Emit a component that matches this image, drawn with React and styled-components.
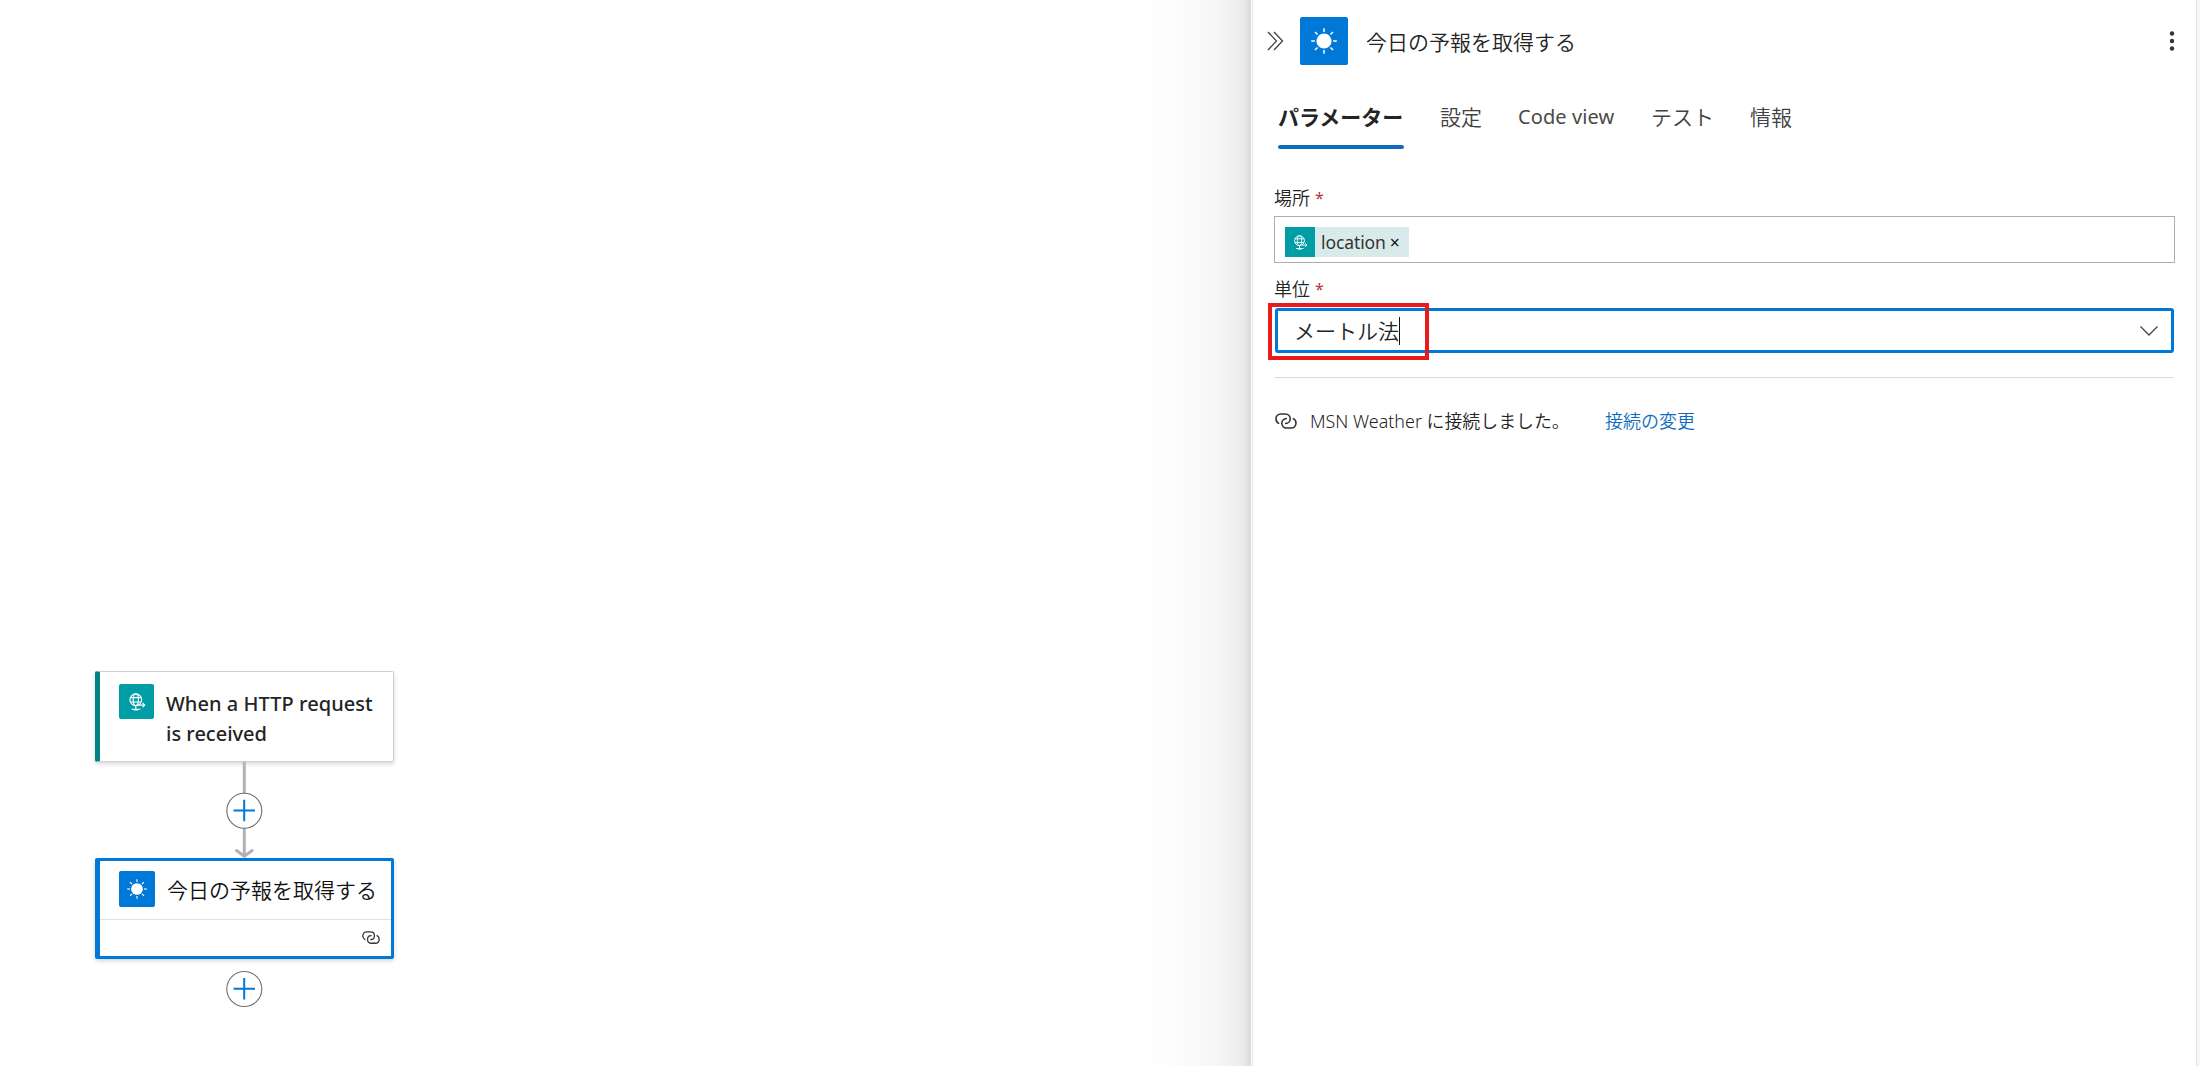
import React from "react";
import styled, { createGlobalStyle } from "styled-components";

const Global = createGlobalStyle`
  * { box-sizing: border-box; }
  body { margin: 0; background: #fff; overflow: hidden; }
`;

const Page = styled.div`
  display: flex;
  width: 2200px;
  height: 1066px;
  background: #fff;
  color: #242424;
  font-family: "Noto Sans", "Noto Sans CJK JP", sans-serif;
`;

const Text = styled.span`
  display: block;
  white-space: nowrap;
  font-size: ${(p) => p.$size || 21}px;
  line-height: ${(p) => p.$line || 28}px;
  font-weight: ${(p) => p.$weight || 400};
  letter-spacing: ${(p) => p.$track || 0}px;
  color: ${(p) => p.$color || "#242424"};
`;

const Canvas = styled.main`
  position: relative;
  flex: 0 0 1251px;
  background: linear-gradient(to right, #fff 1140px, #fcfcfc 1178px, #f6f6f6 1218px, #eeeeee 1238px, #e8e8e8 1245px, #dadada 1251px);
`;

const Node = styled.article`
  position: absolute;
  left: 95px;
  top: ${(p) => p.$top}px;
  width: 299px;
  height: ${(p) => p.$height}px;
  display: flex;
  flex-direction: column;
  background: #fff;
  border-style: solid;
  border-color: ${(p) => (p.$selected ? "#0078d7" : "#d0d0d2")};
  border-width: ${(p) => (p.$selected ? "3px" : "1px")};
  border-left: 5px solid ${(p) => (p.$selected ? "#0078d7" : "#038387")};
  border-radius: 2px;
  box-shadow: 0 2px 4px rgba(0, 0, 0, 0.16);
`;

const NodeHead = styled.div`
  display: flex;
  flex: 1;
  gap: 12px;
  padding: ${(p) => p.$top}px 0 0 19px;
`;

const NodeTitle = styled.div`
  padding-top: ${(p) => p.$top}px;
`;

const NodeFoot = styled.div`
  display: flex;
  justify-content: flex-end;
  align-items: center;
  height: 37px;
  padding-right: 11px;
  border-top: 1px solid #e1e1e1;
`;

const Tile = styled.div`
  display: flex;
  flex: none;
  align-items: center;
  justify-content: center;
  width: ${(p) => p.$size}px;
  height: ${(p) => p.$size}px;
  border-radius: ${(p) => (p.$square ? 0 : 2)}px;
  background: ${(p) => p.$bg};
`;

const Edge = styled.svg`
  position: absolute;
  left: 226px;
  top: ${(p) => p.$top}px;
`;

const Panel = styled.aside`
  display: flex;
  flex-direction: column;
  flex: 0 0 945px;
  border-left: 1px solid #e4e4e4;
  border-right: 1px solid #e3e3e3;
  margin-left: 1px;
  padding: 17px 20px 0 21px;
  background: #fff;
`;

const Gutter = styled.div`
  flex: 1;
  background: #f7f7f7;
`;

const Header = styled.header`
  display: flex;
  align-items: center;
  height: 48px;
  margin: 0 1px 0 -7px;
`;

const Title = styled.h1`
  flex: 1;
  margin: 2px 0 0 18px;
  font-weight: 400;
`;

const Collapse = styled.div`
  display: flex;
  width: 33px;
`;

const TabList = styled.nav`
  display: flex;
  gap: 36px;
  height: 48px;
  margin: 37px 0 0 4px;
`;

const Tab = styled.div`
  width: ${(p) => p.$width}px;
  padding-top: 1px;
`;

const ActiveTab = styled.div`
  display: flex;
  flex-direction: column;
  justify-content: space-between;
  width: 126px;
  height: 47px;
  padding-top: 1px;
`;

const Underline = styled.span`
  height: 4px;
  border-radius: 2px;
  background: #0f6cbd;
`;

const Label = styled.label`
  display: flex;
  gap: 5px;
  height: 24px;
  margin-top: ${(p) => p.$top}px;
`;

const TokenField = styled.div`
  display: flex;
  width: 901px;
  height: 47px;
  margin-top: 6px;
  padding: 10px;
  border: 1px solid #adadad;
`;

const Token = styled.div`
  display: flex;
  align-items: center;
  width: 124px;
  height: 30px;
  background: #d9eaeb;
`;

const TokenText = styled.div`
  display: flex;
  gap: 4px;
  padding-left: 6px;
`;

const Combo = styled.div`
  position: relative;
  display: flex;
  align-items: center;
  justify-content: space-between;
  width: 899px;
  height: 45px;
  margin: 7px 0 0 1px;
  padding: 0 13px 0 16px;
  border: 3px solid #0078d7;
  border-radius: 3px;
`;

const ComboValue = styled.div`
  display: flex;
  align-items: center;
  border-right: 1px solid #111;
`;

const Highlight = styled.div`
  position: absolute;
  left: -10px;
  top: -8px;
  width: 161px;
  height: 57px;
  border: 4px solid #e81b1b;
`;

const Connection = styled.footer`
  display: flex;
  align-items: center;
  width: 899px;
  height: 87px;
  margin: 24px 0 0 1px;
  border-top: 1px solid #dcdcdc;
`;

const Message = styled.div`
  width: 295px;
  margin-left: 13px;
`;

const Sun = ({ size }) => (
  <svg width={size} height={size} viewBox="0 0 26 26" stroke="#fff" strokeWidth="1.5">
    <circle cx="13" cy="13" r="7.600" fill="#fff" stroke="none" />
    {[0, 45, 90, 135, 180, 225, 270, 315].map((a) => (
      <path key={a} d="M13 0.2v3.7" transform={`rotate(${a} 13 13)`} />
    ))}
  </svg>
);

const Globe = ({ size }) => (
  <svg width={size} height={size} viewBox="0 0 18 18" fill="none" stroke="#fff" strokeWidth="1.1">
    <circle cx="7.8" cy="6.8" r="5.9" />
    <ellipse cx="7.8" cy="6.8" rx="2.6" ry="5.9" />
    <path d="M2.4 4.6h10.8M2.4 9h10.8M7.8 12.7v3M3.5 16.2h9M6 17h4" />
    <path d="M10.500 12.1h6M14.6 9.900l2.200 2.200-2.200 2.200" />
  </svg>
);

const Link = ({ width, stroke = "#333" }) => (
  <svg width={width} height={width * 0.727} viewBox="0 0 22 16" fill="none" stroke={stroke} strokeWidth="1.6" strokeLinecap="round">
    <path d="M3.600 10.400C2 9.500 1 7.900 1 6c0-2.900 2-5 5-5h4.200c3 0 5 2 5 4.700s-2 4.700-4.400 4.700" />
    <path d="M18.400 5.600c1.600.9 2.600 2.500 2.600 4.400 0 2.900-2 5-5 5h-4.200c-3 0-5-2-5-4.700s2-4.700 4.400-4.700" />
  </svg>
);

const Plus = ({ cy }) => (
  <g>
    <circle cx="18.3" cy={cy} r="17.5" fill="#fff" stroke="#707070" strokeWidth="1.1" />
    <path d={`M7.500 ${cy - 0.3}h21.500M18.200 ${cy - 11}v21.500`} stroke="#0078d7" strokeWidth="2" />
  </g>
);

export default function App() {
  return (
    <Page>
      <Global />
      <Canvas>
        <Node $top={671} $height={91}>
          <NodeHead $top={12}>
            <Tile $size={35} $bg="#009da5"><Globe size={18} /></Tile>
            <NodeTitle $top={5}>
              <Text $size={20} $line={30} $weight={500} $track={0.05}>When a HTTP request</Text>
              <Text $size={20} $line={30} $weight={500}>is received</Text>
            </NodeTitle>
          </NodeHead>
        </Node>
        <Edge $top={762} width="37" height="97">
          <path d="M18.300 0v93" stroke="#b3b1b8" strokeWidth="3" />
          <path d="M10.500 88.500l7.800 5.700 7.800-5.700" fill="none" stroke="#b3b1b8" strokeWidth="3" strokeLinecap="round" strokeLinejoin="round" />
          <Plus cy={48.7} />
        </Edge>
        <Node $selected $top={858} $height={101}>
          <NodeHead $top={10}>
            <Tile $size={36} $bg="#0078d7"><Sun size={20} /></Tile>
            <NodeTitle $top={5}>
              <Text $weight={350} $color="#111">今日の予報を取得する</Text>
            </NodeTitle>
          </NodeHead>
          <NodeFoot><Link width={18} /></NodeFoot>
        </Node>
        <Edge $top={970} width="37" height="38"><Plus cy={19} /></Edge>
      </Canvas>
      <Panel>
        <Header>
          <Collapse>
            <svg width="17" height="20" viewBox="0 0 17 20" fill="none" stroke="#424242" strokeWidth="1.300">
              <path d="M1 1l8.500 9L1 19M7 1l8.500 9L7 19" />
            </svg>
          </Collapse>
          <Tile $size={48} $bg="#0078d7"><Sun size={26} /></Tile>
          <Title><Text $weight={350}>今日の予報を取得する</Text></Title>
          <svg width="6" height="20" viewBox="0 0 6 20" fill="#333">
            <circle cx="3" cy="2.500" r="2.200" /><circle cx="3" cy="10" r="2.200" /><circle cx="3" cy="17.500" r="2.200" />
          </svg>
        </Header>
        <TabList>
          <ActiveTab><Text $weight={700}>パラメーター</Text><Underline /></ActiveTab>
          <Tab $width={42}><Text $weight={350} $color="#424242">設定</Text></Tab>
          <Tab $width={97}><Text $size={20} $track={0.1} $color="#4a4a4a">Code view</Text></Tab>
          <Tab $width={63}><Text $weight={350} $color="#424242">テスト</Text></Tab>
          <Tab $width={42}><Text $weight={350} $color="#424242">情報</Text></Tab>
        </TabList>
        <Label $top={36}>
          <Text $size={18} $line={24} $weight={350}>場所</Text>
          <Text $size={16} $line={24} $color="#b53540">*</Text>
        </Label>
        <TokenField>
          <Token>
            <Tile $square $size={30} $bg="#009da5"><Globe size={15} /></Tile>
            <TokenText>
              <Text $size={17.5} $track={-0.1} $color="#333">location</Text>
              <Text $size={17.5} $color="#111">×</Text>
            </TokenText>
          </Token>
        </TokenField>
        <Label $top={14}>
          <Text $size={18} $line={24} $weight={350}>単位</Text>
          <Text $size={16} $line={24} $color="#b53540">*</Text>
        </Label>
        <Combo>
          <ComboValue><Text $weight={350}>メートル法</Text></ComboValue>
          <svg width="18" height="10" viewBox="0 0 18 10" fill="none" stroke="#444" strokeWidth="1.300">
            <path d="M.5.500L9 9 17.500.500" />
          </svg>
          <Highlight />
        </Combo>
        <Connection>
          <Link width={22} />
          <Message><Text $size={17.9} $weight={350}>MSN Weather に接続しました。</Text></Message>
          <Text $size={18} $weight={350} $color="#0f6cbd">接続の変更</Text>
        </Connection>
      </Panel>
      <Gutter />
    </Page>
  );
}
